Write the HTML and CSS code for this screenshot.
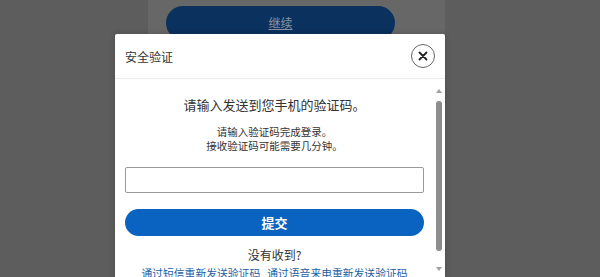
FILE: index.html
```html
<!DOCTYPE html>
<html lang="zh-CN">
<head>
    <meta charset="UTF-8">
    <meta name="viewport" content="width=device-width, initial-scale=1.0">
    <title>安全验证</title>
    <link rel="stylesheet" href="styles.css">
</head>
<body>
    <!-- 背后的页面 (被遮罩) -->
    <div class="page-card">
        <button class="continue-button">继续</button>
    </div>

    <!-- 安全验证弹窗 -->
    <div class="modal">
        <div class="modal-header">
            <span class="modal-title">安全验证</span>
            <button class="close-button" aria-label="关闭">
                <svg width="10" height="10" viewBox="0 0 10 10">
                    <path d="M1.5 1.5 L8.5 8.5 M8.5 1.5 L1.5 8.5" stroke="#222" stroke-width="1.8" stroke-linecap="round"/>
                </svg>
            </button>
        </div>

        <div class="modal-body">
            <div class="modal-content">
                <h2 class="code-title">请输入发送到您手机的验证码。</h2>
                <p class="code-hint">请输入验证码完成登录。<br>接收验证码可能需要几分钟。</p>
                <input class="code-input" type="text">
                <button class="submit-button">提交</button>
                <p class="not-received">没有收到?</p>
                <div class="resend-links">
                    <a href="#">通过短信重新发送验证码</a>
                    <a href="#">通过语音来电重新发送验证码</a>
                </div>
            </div>

            <div class="scrollbar">
                <span class="arrow-up"></span>
                <span class="thumb"></span>
                <span class="arrow-down"></span>
            </div>
        </div>
    </div>
</body>
</html>
```

FILE: styles.css
```css
body {
    font-family: "Noto Sans CJK SC", "Liberation Sans", sans-serif;
    background: #5d5d5d;
    margin: 0;
    height: 277px;
    overflow: hidden;
    position: relative;
}

.page-card {
    width: 297px;
    height: 277px;
    margin-left: 148px;
    background: #676767;
    padding-top: 6px;
    box-sizing: border-box;
}

.continue-button {
    display: block;
    width: 229px;
    height: 34px;
    margin-left: 18px;
    background: #0b315e;
    color: #8893a4;
    border: none;
    border-radius: 17px;
    font-family: inherit;
    font-size: 12px;
    text-decoration: underline;
    padding: 0 0 2px;
}

/* 弹窗 */
.modal {
    position: absolute;
    top: 34px;
    left: 115px;
    width: 330px;
    height: 260px;
    background: white;
    border-radius: 2px 2px 0 0;
    box-shadow: 0 0 6px rgba(0,0,0,0.2);
}

.modal-header {
    height: 44px;
    display: flex;
    align-items: center;
    justify-content: space-between;
    padding: 0 10px 0 10px;
    border-bottom: 1px solid #ececec;
}

.modal-title {
    font-size: 12px;
    color: #333;
}

.close-button {
    width: 24px;
    height: 24px;
    border: 1px solid #666;
    border-radius: 50%;
    background: white;
    display: flex;
    align-items: center;
    justify-content: center;
    padding: 0;
}

.modal-body {
    display: flex;
    padding-left: 10px;
}

.modal-content {
    width: 299px;
    text-align: center;
}

.code-title {
    margin: 15px 0 0;
    font-size: 13px;
    font-weight: normal;
    line-height: 22px;
    color: #333;
}

.code-hint {
    margin: 9px 0 0;
    font-size: 10.5px;
    line-height: 14px;
    color: #333;
}

.code-input {
    display: block;
    width: 100%;
    height: 26px;
    box-sizing: border-box;
    margin-top: 14px;
    border: 1px solid #9a9a9a;
    border-radius: 2px;
}

.submit-button {
    display: block;
    width: 100%;
    height: 27px;
    margin-top: 16px;
    background: #0b63c1;
    color: white;
    border: none;
    border-radius: 14px;
    font-family: inherit;
    font-size: 13px;
    font-weight: bold;
    padding: 0;
}

.not-received {
    margin: 10px 0 0;
    font-size: 12px;
    line-height: 18px;
    color: #333;
}

.resend-links {
    display: flex;
    justify-content: center;
    gap: 7px;
    font-size: 10.8px;
    line-height: 18px;
    white-space: nowrap;
}

.resend-links a {
    color: #1b5fa6;
    text-decoration: none;
}

/* 滚动条 */
.scrollbar {
    width: 8px;
    margin-left: 11px;
    display: flex;
    flex-direction: column;
    align-items: center;
    padding-top: 10px;
}

.arrow-up {
    width: 0;
    height: 0;
    border-left: 3px solid transparent;
    border-right: 3px solid transparent;
    border-bottom: 4px solid #a0a0a0;
}

.thumb {
    width: 6px;
    height: 150px;
    margin-top: 8px;
    background: #8d8d8d;
    border-radius: 3px;
}

.arrow-down {
    width: 0;
    height: 0;
    margin-top: 16px;
    border-left: 3px solid transparent;
    border-right: 3px solid transparent;
    border-top: 4px solid #a0a0a0;
}
```
